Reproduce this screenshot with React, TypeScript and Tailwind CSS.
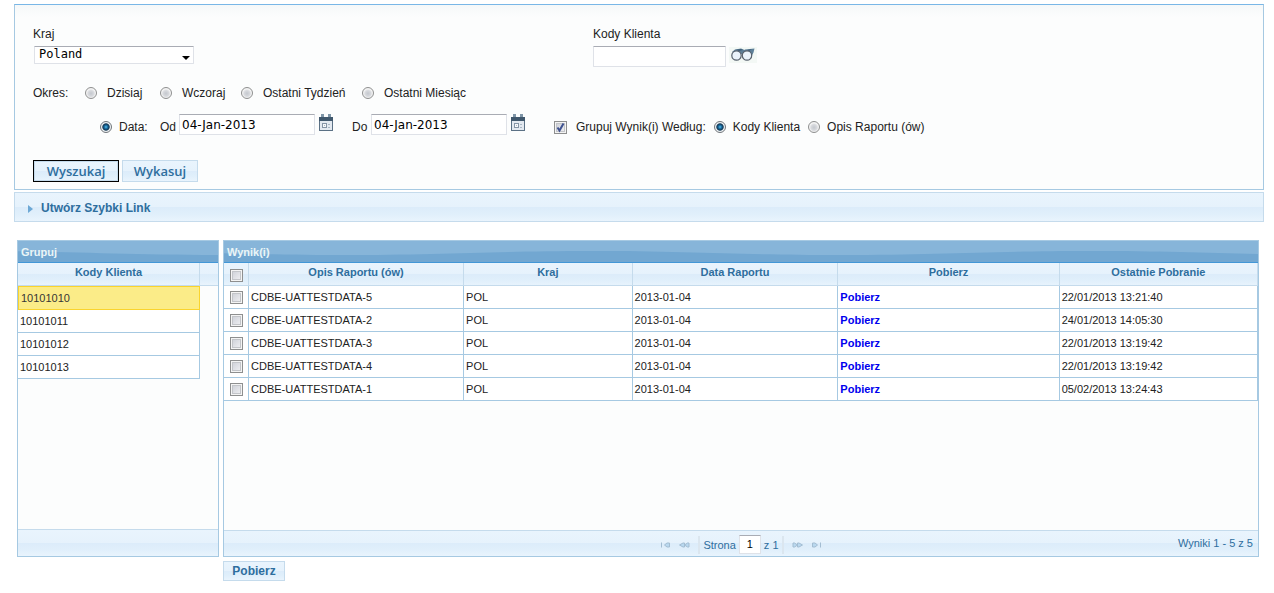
import { useState, type ReactNode } from "react";

const bar =
  "bg-[linear-gradient(to_bottom,#e9f4fd_0%,#e6f2fc_50%,#dcecfa_50%,#e0effb_75%,#e9f4fd_100%)]";
const titleBar =
  "relative h-[22px] overflow-hidden border-b border-[#4297d7] bg-[#72a7d1] pl-[3px] text-[11px] leading-[23px] font-bold text-[#eaf5f7]";

const radioClass =
  "size-3 shrink-0 appearance-none rounded-full border border-[#8e8f8f] bg-[radial-gradient(circle_at_50%_55%,#c4c8ce_0%,#d8dade_40%,#f4f4f4_60%,#f4f4f4_100%)] checked:border-[#70757a] checked:bg-[radial-gradient(circle_at_50%_50%,#58c3ea_0%,#1c6fa4_22%,#10344f_46%,#eef2f5_58%,#f4f4f4_100%)]";
const checkClass =
  "size-[13px] shrink-0 appearance-none border border-[#8e8f8f] bg-[linear-gradient(135deg,#c9ccd4,#f4f4f6)] shadow-[inset_0_0_0_1px_#f4f4f4,inset_0_0_0_2px_#c3c5c9]";
const inputClass =
  "border border-[#dfe2e8] border-t-[#a9acb4] bg-white text-black outline-none";
const cell = "h-[23px] truncate border-r border-b border-[#a6c9e2] pl-[2px] text-[11px]";
const headCell = "h-[23px] border-r border-b border-[#c5dbec] pb-[5px] text-[11px] font-bold";

function Calendar() {
  return (
    <svg width="14" height="17" viewBox="0 0 14 17" aria-hidden="true">
      <rect x="0" y="3" width="14" height="14" rx="0.500" fill="#5b7185" />
      <rect x="2" y="0" width="3" height="4" fill="#7f96a8" />
      <rect x="9" y="0" width="3" height="4" fill="#7f96a8" />
      <path d="M0 3h14v4H0z" fill="#40586d" />
      <rect x="1" y="7" width="12" height="9" fill="#e3e9f0" />
      <rect x="3.500" y="9.500" width="4" height="4" fill="#f6f8fa" stroke="#8494a5" />
      <path d="M5 11.500h1M9 10.500h2M9 13.500h2" stroke="#a9b7c4" />
    </svg>
  );
}

function Glasses() {
  return (
    <svg width="28" height="16" viewBox="0 0 28 16" aria-hidden="true">
      <rect width="28" height="16" fill="#f3f8f5" />
      <path d="M3 5 6 2.500 12 1.500 15.500 3 14 8 9 5zM13 5l3-2.500 9.500-1-1 4-3 6-4-6z" fill="#5d7f98" />
      <path d="M6 3l6-1 2 1-4 1zM16 3.500l7-1.500-3 2z" fill="#3f5d76" />
      <circle cx="7.500" cy="8.500" r="4.700" fill="#eaf3fb" stroke="#56606c" strokeWidth="1.200" />
      <circle cx="18" cy="8.500" r="4.700" fill="#eaf3fb" stroke="#56606c" strokeWidth="1.200" />
    </svg>
  );
}

function PagerIcon({ last = false, flip = false }: { last?: boolean; flip?: boolean }) {
  return (
    <svg
      width="11"
      height="6"
      viewBox="0 0 11 6"
      className={flip ? "-scale-x-100" : ""}
      fill="#b9d8ef"
      stroke="#a3bdd2"
      aria-hidden="true"
    >
      {last ? (
        <>
          <path d="M1.500 0.500v5" />
          <path d="M9.500 1v4H7L4.500 3 7 1z" />
        </>
      ) : (
        <>
          <path d="M5.500 1v4H4L0.500 3 4 1z" />
          <path d="M10 1v4H8.500L5.500 3 8.500 1z" />
        </>
      )}
    </svg>
  );
}

function Radio({ name, label, checked, className }: { name: string; label: string; checked?: boolean; className: string }) {
  return (
    <label className={`flex items-center ${className}`}>
      <input type="radio" name={name} defaultChecked={checked} className={radioClass} />
      {label}
    </label>
  );
}

function DateField({ id, label }: { id: string; label: string }) {
  return (
    <div className="flex items-start">
      <label htmlFor={id} className="w-[19px] pt-[6px]">
        {label}
      </label>
      <input
        id={id}
        defaultValue="04-Jan-2013"
        className={`${inputClass} h-[21px] w-[136px] pl-[2px] font-['DejaVu_Sans',sans-serif] text-[12px]`}
      />
      <button type="button" aria-label="Kalendarz" className="ml-1">
        <Calendar />
      </button>
    </div>
  );
}

function TitleBar({ children }: { children: ReactNode }) {
  return (
    <div className={titleBar}>
      <svg
        className="absolute top-0 left-1/2 -translate-x-1/2"
        width="2500"
        height="21"
        viewBox="0 0 2500 21"
        aria-hidden="true"
      >
        <path
          d="M0 0H2500V12C2530 11 2560 10 2600 10L2500 12C2450 14 2400 14 2350 14C2250 14 2200 10 2100 10S1950 14 1850 14S1700 10 1600 10S1450 14 1350 14S1200 10 1100 10S950 14 850 14S700 10 600 10S450 14 350 14S200 10 100 10Q50 10 0 12z"
          fill="#87b5d9"
        />
      </svg>
      <span className="relative">{children}</span>
    </div>
  );
}

const clients = ["10101010", "10101011", "10101012", "10101013"];
const rows = [
  ["CDBE-UATTESTDATA-5", "22/01/2013 13:21:40"],
  ["CDBE-UATTESTDATA-2", "24/01/2013 14:05:30"],
  ["CDBE-UATTESTDATA-3", "22/01/2013 13:19:42"],
  ["CDBE-UATTESTDATA-4", "22/01/2013 13:19:42"],
  ["CDBE-UATTESTDATA-1", "05/02/2013 13:24:43"],
];

export default function App() {
  const [selected, setSelected] = useState(0);
  return (
    <main className="bg-white px-[14px] pt-1 pr-[10px] font-['Liberation_Sans',Arial,sans-serif] text-[12px] leading-[14px] text-[#222]">
      <form
        onSubmit={(e) => e.preventDefault()}
        className="border border-[#a6c9e2] border-t-[#79b7e7] bg-[#fcfdfd] bg-[linear-gradient(#f5f8f9,#fcfdfd)] bg-[length:100%_12px] bg-no-repeat px-[18px] pt-[22px] pb-[7px]"
      >
        <div className="flex">
          <div className="flex w-[560px] flex-col">
            <label htmlFor="kraj">Kraj</label>
            <div className="relative mt-[5px] ml-px w-[160px]">
              <select
                id="kraj"
                className={`${inputClass} block h-[18px] w-full appearance-none rounded-[1px] pb-[2px] pl-1 font-['DejaVu_Sans_Mono',monospace] text-[12px] leading-[14px]`}
              >
                <option>Poland</option>
              </select>
              <svg width="8" height="4" viewBox="0 0 8 4" className="pointer-events-none absolute right-1 bottom-1" aria-hidden="true">
                <path d="M0 0h8L4 4z" fill="#000" />
              </svg>
            </div>
          </div>
          <div className="flex flex-col">
            <label htmlFor="kody">Kody Klienta</label>
            <div className="mt-[5px] flex items-start gap-[3px]">
              <input id="kody" className={`${inputClass} h-[21px] w-[133px] rounded-[1px] pl-1`} />
              <button type="button" aria-label="Szukaj" className="mt-px">
                <Glasses />
              </button>
            </div>
          </div>
        </div>

        <div className="mt-[19px] flex items-center">
          <span className="w-[52px]">Okres:</span>
          <Radio name="okres" label="Dzisiaj" className="w-[75px] gap-[10px]" />
          <Radio name="okres" label="Wczoraj" className="w-[81px] gap-[10px]" />
          <Radio name="okres" label="Ostatni Tydzień" className="w-[121px] gap-[10px]" />
          <Radio name="okres" label="Ostatni Miesiąc" className="gap-[10px]" />
        </div>

        <div className="mt-[14px] flex items-start pl-[67px]">
          <Radio name="okres" label="Data:" checked className="w-[60px] gap-[7px] pt-[6px]" />
          <div className="w-[192px]">
            <DateField id="od" label="Od" />
          </div>
          <div className="w-[202px]">
            <DateField id="do" label="Do" />
          </div>
          <div className="flex items-center pt-[6px]">
            <label className="flex items-center gap-[9px]">
              <span className="relative flex">
                <input type="checkbox" defaultChecked className={`peer ${checkClass}`} />
                <svg viewBox="0 0 13 13" className="pointer-events-none absolute inset-0 hidden size-[13px] peer-checked:block" aria-hidden="true">
                  <path d="M3.500 6.500 5.500 9.500 9.500 2.500" fill="none" stroke="#3f5290" strokeWidth="2" />
                </svg>
              </span>
              Grupuj Wynik(i) Według:
            </label>
            <Radio name="grupa" label="Kody Klienta" checked className="ml-2 gap-[7px]" />
            <Radio name="grupa" label="Opis Raportu (ów)" className="ml-2 gap-[7px]" />
          </div>
        </div>

        <div className="mt-[25px] flex gap-[3px] font-['Open_Sans',sans-serif] text-[13px] font-semibold text-[#2e6e9e]">
          <button type="submit" className={`h-[22px] w-[86px] border border-black shadow-[inset_0_0_0_1px_#c5dbec] ${bar}`}>
            Wyszukaj
          </button>
          <button type="reset" className={`h-[22px] w-[76px] border border-[#c5dbec] ${bar}`}>
            Wykasuj
          </button>
        </div>
      </form>

      <button
        type="button"
        className={`mt-[2px] flex h-[30px] w-full items-center gap-2 border border-[#c5dbec] pt-[2px] pl-[13px] font-bold text-[#2e6e9e] ${bar}`}
      >
        <svg width="5" height="8" viewBox="0 0 5 8" className="mt-[2px]" aria-hidden="true">
          <path d="M0 0v8l5-4z" fill="#6da8d5" />
        </svg>
        Utwórz Szybki Link
      </button>

      <div className="mt-[18px] flex items-stretch gap-1 pr-[5px] pl-[3px]">
        <section className="flex w-[202px] shrink-0 flex-col border border-[#a6c9e2] bg-[#fcfdfd]">
          <TitleBar>Grupuj</TitleBar>
          <div className={`h-[23px] border-b border-[#c5dbec] ${bar}`}>
            <div className="mr-[18px] flex h-[22px] items-center justify-center border-r border-[#c5dbec] pb-[5px] text-[11px] font-bold text-[#2e6e9e]">
              Kody Klienta
            </div>
          </div>
          <table className="mr-[18px] table-fixed border-separate border-spacing-0">
            <tbody>
              {clients.map((c, i) => (
                <tr key={c} onClick={() => setSelected(i)}>
                  <td
                    className={
                      i === selected
                        ? "h-6 border border-[#fad42e] bg-[#fbec88] pl-[2px] text-[11px] text-[#363636]"
                        : `${cell} bg-white`
                    }
                  >
                    {c}
                  </td>
                </tr>
              ))}
            </tbody>
          </table>
          <div className={`mt-auto h-[27px] border-t border-[#c5dbec] ${bar}`} />
        </section>

        <section className="flex min-w-0 grow flex-col border border-[#a6c9e2] bg-[#fcfdfd]">
          <TitleBar>Wynik(i)</TitleBar>
          <table className="w-full table-fixed border-separate border-spacing-0">
            <colgroup>
              <col className="w-[25px]" />
              <col className="w-[20.8%]" />
              <col className="w-[16.3%]" />
              <col className="w-[19.9%]" />
              <col className="w-[21.4%]" />
              <col />
            </colgroup>
            <thead className={`text-[#2e6e9e] ${bar}`}>
              <tr>
                <th className={`${headCell} pt-[3px] !pb-0`}>
                  <input type="checkbox" aria-label="Zaznacz wszystko" className={`mx-auto block ${checkClass}`} />
                </th>
                {["Opis Raportu (ów)", "Kraj", "Data Raportu", "Pobierz", "Ostatnie Pobranie"].map((h) => (
                  <th key={h} className={headCell}>
                    {h}
                  </th>
                ))}
              </tr>
            </thead>
            <tbody className="bg-white">
              {rows.map(([name, date]) => (
                <tr key={name}>
                  <td className={cell}>
                    <input type="checkbox" aria-label={name} className={`ml-1 block ${checkClass}`} />
                  </td>
                  <td className={cell}>{name}</td>
                  <td className={cell}>POL</td>
                  <td className={cell}>2013-01-04</td>
                  <td className={cell}>
                    <a href="#" className="font-bold text-[#0000ee]">
                      Pobierz
                    </a>
                  </td>
                  <td className={cell}>{date}</td>
                </tr>
              ))}
            </tbody>
          </table>
          <div className={`mt-[129px] grid h-[26px] grid-cols-3 items-center border-t border-[#c5dbec] text-[11px] text-[#2e6e9e] ${bar}`}>
            <div className="col-start-2 flex items-center justify-center gap-2 pt-[2px]">
              <button type="button" aria-label="Pierwsza"><PagerIcon last /></button>
              <button type="button" aria-label="Poprzednia"><PagerIcon /></button>
              <label className="flex h-[18px] items-center gap-[3px] border-x-2 border-[#dbe6ef] px-[3px] whitespace-nowrap">
                Strona
                <input defaultValue="1" className={`${inputClass} h-[19px] w-[22px] pb-[2px] text-center`} />
                z 1
              </label>
              <button type="button" aria-label="Następna"><PagerIcon flip /></button>
              <button type="button" aria-label="Ostatnia"><PagerIcon last flip /></button>
            </div>
            <div className="pr-[5px] pb-[2px] text-right">Wyniki 1 - 5 z 5</div>
          </div>
        </section>
      </div>
      <button
        type="button"
        className={`mt-1 ml-[209px] block h-5 w-[62px] border border-[#c5dbec] font-bold text-[#2e6e9e] ${bar}`}
      >
        Pobierz
      </button>
    </main>
  );
}
